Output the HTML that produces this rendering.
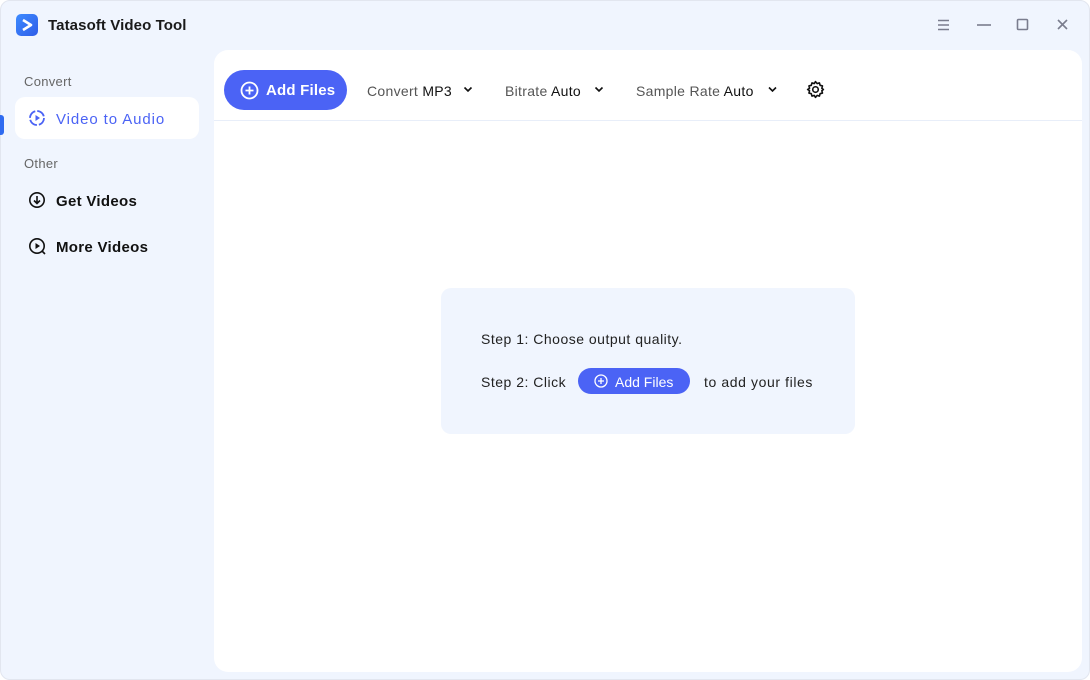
<!DOCTYPE html>
<html><head><meta charset="utf-8"><style>
*{margin:0;padding:0;box-sizing:border-box}
body{width:1090px;height:680px;background:#fff;font-family:"Liberation Sans",sans-serif;position:relative;overflow:hidden;color:#111}
.win{position:absolute;left:0;top:0;width:1090px;height:680px;background:#f0f5fe;border:1px solid #e2e6ef;border-radius:10px}
.abs{position:absolute}
.logo{left:16px;top:14px;width:22px;height:22px;border-radius:5px;background:linear-gradient(135deg,#3d8bff,#2f5de8)}
.title{left:48px;top:17px;font-size:15px;font-weight:bold;color:#1a1a1a;letter-spacing:0.1px}
.sec{font-size:13px;color:#666;letter-spacing:0.3px}
.nav{font-size:15px;font-weight:bold;color:#111;letter-spacing:0.3px}
.main{left:214px;top:50px;width:868px;height:622px;background:#fff;border-radius:14px}
.btn{left:224px;top:70px;width:123px;height:40px;border-radius:20px;background:#4b63f5;color:#fff;font-size:15px;font-weight:bold}
.dd{top:83px;font-size:14px;color:#555;letter-spacing:0.3px}
.dd b{color:#111;font-weight:normal}
.card{left:441px;top:288px;width:414px;height:146px;background:#f0f5fe;border-radius:10px}
.step{font-size:14px;color:#222;letter-spacing:0.5px}
.sbtn{left:578px;top:368px;width:112px;height:26px;border-radius:13px;background:#4b63f5;color:#fff;font-size:14px}
</style></head><body>
<div class="win"></div>
<div class="abs logo"><svg width="22" height="22" viewBox="0 0 22 22"><path d="M7 6 L15 11 L7 16" fill="none" stroke="#fff" stroke-width="2.6" stroke-linejoin="round"/></svg></div>
<div class="abs title">Tatasoft Video Tool</div>
<svg class="abs" style="left:930px;top:14px" width="145" height="22" viewBox="0 0 145 22">
<g stroke="#7a7d8e" stroke-width="1.6" fill="none">
<path d="M8 6.5h11M8 11h11M8 15.5h11"/>
<path d="M47 11h14"/>
<rect x="87.5" y="5.5" width="10" height="10" rx="1"/>
<path d="M128 6l9 9M137 6l-9 9"/>
</g></svg>
<div class="abs sec" style="left:24px;top:74px">Convert</div>
<div class="abs" style="left:15px;top:97px;width:184px;height:42px;background:#fff;border-radius:10px"></div>
<div class="abs" style="left:0;top:115px;width:4px;height:20px;background:#2f6bf0;border-radius:0 3px 3px 0"></div>
<svg class="abs" style="left:28px;top:109px" width="18" height="18" viewBox="0 0 18 18"><circle cx="9" cy="9" r="7" fill="none" stroke="#4b63f5" stroke-width="1.8" stroke-dasharray="9 2"/><path d="M7.5 6v6l4.5-3z" fill="#4b63f5"/></svg>
<div class="abs nav" style="left:56px;top:111px;color:#4b63f5;font-weight:normal;letter-spacing:0.9px">Video to Audio</div>
<div class="abs sec" style="left:24px;top:156px">Other</div>
<svg class="abs" style="left:28px;top:191px" width="18" height="18" viewBox="0 0 18 18"><circle cx="9" cy="9" r="7.2" fill="none" stroke="#111" stroke-width="1.6"/><path d="M9 5v7M6 9.5l3 3 3-3" fill="none" stroke="#111" stroke-width="1.6"/></svg>
<div class="abs nav" style="left:56px;top:193px">Get Videos</div>
<svg class="abs" style="left:28px;top:237px" width="18" height="18" viewBox="0 0 18 18"><circle cx="9" cy="9" r="7.2" fill="none" stroke="#111" stroke-width="1.6"/><path d="M14 14l3 3" stroke="#111" stroke-width="1.6"/><path d="M7.5 6v6l4.5-3z" fill="#111"/></svg>
<div class="abs nav" style="left:56px;top:239px">More Videos</div>
<div class="abs main"></div>
<div class="abs" style="left:214px;top:120px;width:868px;height:1px;background:#e8eef9"></div>
<div class="abs btn"><svg class="abs" style="left:16px;top:11px" width="19" height="19" viewBox="0 0 19 19"><circle cx="9.5" cy="9.5" r="8" fill="none" stroke="#fff" stroke-width="1.8"/><path d="M9.5 5.5v8M5.5 9.5h8" stroke="#fff" stroke-width="1.8"/></svg><span class="abs" style="left:42px;top:12px;letter-spacing:0.2px">Add Files</span></div>
<div class="abs dd" style="left:367px">Convert <b>MP3</b></div>
<div class="abs dd" style="left:505px">Bitrate <b>Auto</b></div>
<div class="abs dd" style="left:636px">Sample Rate <b>Auto</b></div>
<svg class="abs" style="left:0;top:0" width="1090" height="120"><g fill="none" stroke="#111" stroke-width="1.6"><path d="M464.5 87.5l3.5 3.5 3.5-3.5M595.5 87.5l3.5 3.5 3.5-3.5M769 87.5l3.5 3.5 3.5-3.5"/></g></svg>
<svg class="abs" style="left:806px;top:80px" width="19" height="19" viewBox="0 0 24 24"><path d="M12 2l2 2.5 3-.8.8 3 3 .8-.8 3L22 12l-2 1.5.8 3-3 .8-.8 3-3-.8L12 22l-1.5-2.5-3 .8-.8-3-3-.8.8-3L2 12l2.5-1.5-.8-3 3-.8.8-3 3 .8z" fill="none" stroke="#111" stroke-width="2" stroke-linejoin="round"/><circle cx="12" cy="12" r="3.5" fill="none" stroke="#111" stroke-width="2"/></svg>
<div class="abs card"></div>
<div class="abs step" style="left:481px;top:331px">Step 1: Choose output quality.</div>
<div class="abs step" style="left:481px;top:374px">Step 2: Click</div>
<div class="abs sbtn"><svg class="abs" style="left:16px;top:6px" width="14" height="14" viewBox="0 0 14 14"><circle cx="7" cy="7" r="6" fill="none" stroke="#fff" stroke-width="1.3"/><path d="M7 4v6M4 7h6" stroke="#fff" stroke-width="1.3"/></svg><span class="abs" style="left:37px;top:6px">Add Files</span></div>
<div class="abs step" style="left:704px;top:374px;letter-spacing:0.6px">to add your files</div>
</body></html>
